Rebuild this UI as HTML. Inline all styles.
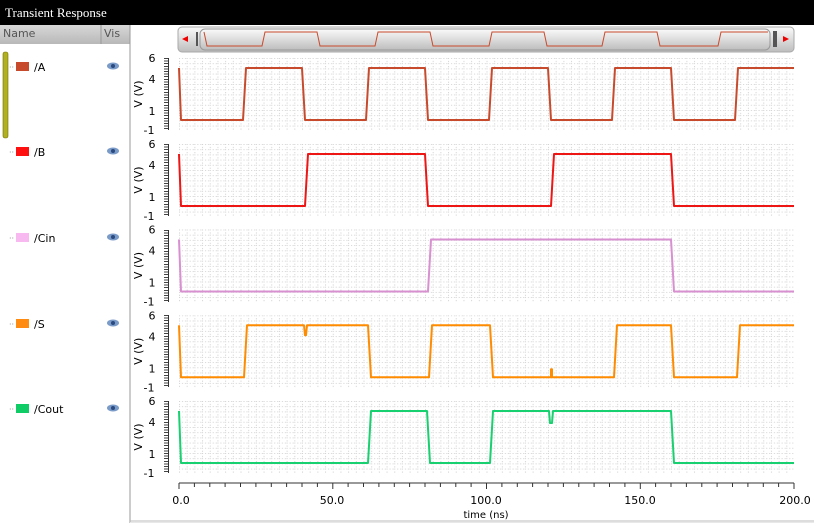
<!DOCTYPE html>
<html><head><style>
body{margin:0;width:814px;height:523px;overflow:hidden;background:#fff;font-family:"DejaVu Sans","Liberation Sans",sans-serif}
.tk{position:absolute;left:164px;width:4px;background:repeating-linear-gradient(to bottom,#444 0,#444 1px,transparent 1px,transparent 2.6px);height:72px}
.ax{position:absolute;left:168px;width:1px;height:72px;background:#333}
</style></head><body>
<svg width="814" height="523" xmlns="http://www.w3.org/2000/svg" font-family="DejaVu Sans, Liberation Sans, sans-serif" style="position:absolute;left:0;top:0">
<defs>
<pattern id="g" patternUnits="userSpaceOnUse" x="179" y="58" width="7.6875" height="5.2">
<line x1="0" y1="0.5" x2="7.6875" y2="0.5" stroke="#d0d0d0" stroke-width="1" stroke-dasharray="1,2"/>
<line x1="0.5" y1="0" x2="0.5" y2="5.2" stroke="#d0d0d0" stroke-width="1" stroke-dasharray="1,2"/>
</pattern>
<linearGradient id="sb" x1="0" y1="0" x2="0" y2="1"><stop offset="0" stop-color="#fafafa"/><stop offset="0.5" stop-color="#dcdcdc"/><stop offset="1" stop-color="#bdbdbd"/></linearGradient>
<linearGradient id="hd" x1="0" y1="0" x2="0" y2="1"><stop offset="0" stop-color="#d8d8d8"/><stop offset="1" stop-color="#b8b8b8"/></linearGradient>
<g id="eye"><ellipse cx="0" cy="0" rx="6" ry="3.5" fill="#7a9ac8"/><circle cx="0" cy="0" r="2" fill="#2a4a80"/></g>
</defs>
<rect x="0" y="0" width="814" height="25" fill="#000"/>
<text x="5" y="17" fill="#fff" font-family="Liberation Serif, serif" font-size="13">Transient Response</text>
<rect x="0" y="25" width="130" height="498" fill="#fff"/>
<rect x="0" y="25" width="130" height="19" fill="url(#hd)"/>
<line x1="101" y1="25" x2="101" y2="44" stroke="#999"/>
<text x="3" y="37" font-size="11" fill="#555">Name</text>
<text x="104" y="37" font-size="11" fill="#555">Vis</text>
<line x1="130" y1="25" x2="130" y2="523" stroke="#999"/>
<rect x="3" y="52" width="5" height="86" rx="2" fill="#b0b020" stroke="#707000" stroke-width="0.6"/>
<g font-size="11" fill="#000">
<text x="9" y="70" fill="#888" font-size="8">··</text><rect x="16" y="62" width="13" height="9" fill="#c84a2c"/><text x="34" y="71">/A</text><use href="#eye" x="113" y="66"/>
<text x="9" y="155" fill="#888" font-size="8">··</text><rect x="16" y="147" width="13" height="9" fill="#ff1010"/><text x="34" y="156">/B</text><use href="#eye" x="113" y="151"/>
<text x="9" y="241" fill="#888" font-size="8">··</text><rect x="16" y="233" width="13" height="9" fill="#f8b8f0"/><text x="34" y="242">/Cin</text><use href="#eye" x="113" y="237"/>
<text x="9" y="327" fill="#888" font-size="8">··</text><rect x="16" y="319" width="13" height="9" fill="#ff8c10"/><text x="34" y="328">/S</text><use href="#eye" x="113" y="323"/>
<text x="9" y="412" fill="#888" font-size="8">··</text><rect x="16" y="404" width="13" height="9" fill="#10cc66"/><text x="34" y="413">/Cout</text><use href="#eye" x="113" y="408"/>
</g>
<rect x="178" y="27" width="616" height="25" rx="4" fill="url(#sb)" stroke="#aaa"/>
<polygon points="182,39 188,36 188,42" fill="#e00"/>
<rect x="196" y="32" width="2" height="14" fill="#555"/>
<rect x="200" y="29" width="570" height="21" rx="5" fill="url(#sb)" stroke="#999"/>
<path d="M204,32 L207,46 L262,46 L265,32 L317,32 L320,46 L375,46 L378,32 L430,32 L433,46 L489,46 L492,32 L544,32 L547,46 L602,46 L605,32 L657,32 L660,46 L718,46 L721,32 L768,32" fill="none" stroke="#c84a2c" stroke-width="1"/>
<rect x="773" y="31" width="4" height="16" fill="#555"/>
<polygon points="783,36 789,39 783,42" fill="#e00"/>
<g id="p0">
<rect x="179" y="58" width="615" height="72" fill="url(#g)"/>
<g font-size="11" fill="#000" text-anchor="middle"><text x="152" y="62">6</text><text x="152" y="83">4</text><text x="152" y="115">1</text><text x="149" y="134">-1</text>
<text transform="translate(142,94) rotate(-90)" font-size="11">V (V)</text></g>
</g>
<use href="#p0" y="86"/><use href="#p0" y="171.5"/><use href="#p0" y="257.3"/><use href="#p0" y="343"/>
<g fill="none" stroke-width="2" stroke-linejoin="round">
<path stroke="#c84a2c" d="M179,68 L181,120 L243,120 L246,68 L302,68 L305,120 L366,120 L369,68 L425,68 L428,120 L489,120 L492,68 L548,68 L551,120 L612,120 L615,68 L671,68 L674,120 L735,120 L738,68 L794,68"/>
<path transform="translate(0,86)" stroke="#ee1515" d="M179,68 L181,120 L305,120 L308,68 L425,68 L428,120 L551,120 L554,68 L671,68 L674,120 L794,120"/>
<path transform="translate(0,171.5)" stroke="#d890d0" d="M179,68 L181,120 L428,120 L431,68 L671,68 L674,120 L794,120"/>
<path transform="translate(0,257.3)" stroke="#ff8c00" d="M179,68 L181,120 L244,120 L247,68 L304,68 L305,78 L306,78 L307,68 L368,68 L371,120 L429,120 L432,68 L490,68 L493,120 L551,120 L551,112 L552,112 L552,120 L614,120 L617,68 L671,68 L674,120 L737,120 L740,68 L794,68"/>
<path transform="translate(0,343)" stroke="#18d070" d="M179,68 L181,120 L368,120 L371,68 L427,68 L430,120 L490,120 L493,68 L549,68 L550,80 L552,80 L553,68 L671,68 L674,120 L794,120"/>
</g>
<line x1="179" y1="483" x2="794" y2="483" stroke="#333"/>
<g stroke="#333">
<path d="M179,483v6M194.4,483v4M209.8,483v4M225.1,483v4M240.5,483v4M255.9,483v4M271.3,483v4M286.6,483v4M302,483v4M317.4,483v4M332.8,483v6M348.1,483v4M363.5,483v4M378.9,483v4M394.3,483v4M409.6,483v4M425,483v4M440.4,483v4M455.8,483v4M471.1,483v4M486.5,483v6M501.9,483v4M517.3,483v4M532.6,483v4M548,483v4M563.4,483v4M578.8,483v4M594.1,483v4M609.5,483v4M624.9,483v4M640.3,483v6M655.6,483v4M671,483v4M686.4,483v4M701.8,483v4M717.1,483v4M732.5,483v4M747.9,483v4M763.3,483v4M778.6,483v4M794,483v6"/>
</g>
<g font-size="11" fill="#000" text-anchor="middle">
<text x="181" y="504">0.0</text><text x="486" y="504">100.0</text><text x="332" y="504">50.0</text><text x="640" y="504">150.0</text><text x="795" y="504">200.0</text>
<text x="486" y="518" font-size="10">time (ns)</text></g>
<line x1="130" y1="521" x2="814" y2="521" stroke="#bbb"/>
<rect x="130" y="522" width="684" height="1" fill="#e8e8e8"/>
</svg>
<div class="tk" style="top:58px"></div><div class="ax" style="top:58px"></div>
<div class="tk" style="top:144px"></div><div class="ax" style="top:144px"></div>
<div class="tk" style="top:229.5px"></div><div class="ax" style="top:229.5px"></div>
<div class="tk" style="top:315.3px"></div><div class="ax" style="top:315.3px"></div>
<div class="tk" style="top:401px"></div><div class="ax" style="top:401px"></div>
</body></html>
